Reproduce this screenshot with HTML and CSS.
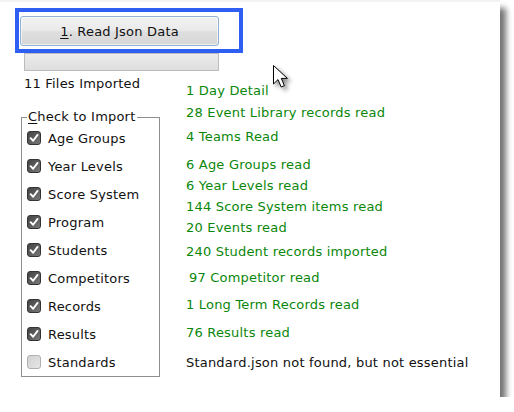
FILE: index.html
```html
<!DOCTYPE html>
<html lang="en">
<head>
<meta charset="utf-8">
<title>Read Json Data</title>
<link rel="stylesheet" href="styles.css">
</head>
<body>
<div class="window">
  <div class="actions">
    <button class="btn" type="button"><u>1</u>. Read Json Data</button>
    <div class="progress"></div>
  </div>
  <div class="focus-mark"></div>

  <div class="main">
    <div class="left">
      <div class="count">11 Files Imported</div>
      <fieldset class="group">
        <legend><u>C</u>heck to Import</legend>
        <label class="row"><span class="cb on"><svg viewBox="0 0 14 14"><path d="M3 7.2 L6 10.2 L11.2 3.4"/></svg></span>Age Groups</label>
        <label class="row"><span class="cb on"><svg viewBox="0 0 14 14"><path d="M3 7.2 L6 10.2 L11.2 3.4"/></svg></span>Year Levels</label>
        <label class="row"><span class="cb on"><svg viewBox="0 0 14 14"><path d="M3 7.2 L6 10.2 L11.2 3.4"/></svg></span>Score System</label>
        <label class="row"><span class="cb on"><svg viewBox="0 0 14 14"><path d="M3 7.2 L6 10.2 L11.2 3.4"/></svg></span>Program</label>
        <label class="row"><span class="cb on"><svg viewBox="0 0 14 14"><path d="M3 7.2 L6 10.2 L11.2 3.4"/></svg></span>Students</label>
        <label class="row"><span class="cb on"><svg viewBox="0 0 14 14"><path d="M3 7.2 L6 10.2 L11.2 3.4"/></svg></span>Competitors</label>
        <label class="row"><span class="cb on"><svg viewBox="0 0 14 14"><path d="M3 7.2 L6 10.2 L11.2 3.4"/></svg></span>Records</label>
        <label class="row"><span class="cb on"><svg viewBox="0 0 14 14"><path d="M3 7.2 L6 10.2 L11.2 3.4"/></svg></span>Results</label>
        <label class="row"><span class="cb off"></span>Standards</label>
      </fieldset>
    </div>

    <div class="log">
      <div class="ok">1 Day Detail</div>
      <div class="ok gap1">28 Event Library records read</div>
      <div class="ok gap3">4 Teams Read</div>
      <div class="ok gap7">6 Age Groups read</div>
      <div class="ok">6 Year Levels read</div>
      <div class="ok">144 Score System items read</div>
      <div class="ok">20 Events read</div>
      <div class="ok gap3">240 Student records imported</div>
      <div class="ok gap5 indent">97 Competitor read</div>
      <div class="ok gap6">1 Long Term Records read</div>
      <div class="ok gap7">76 Results read</div>
      <div class="msg gap9">Standard.json not found, but not essential</div>
    </div>
  </div>

  <svg class="cursor" width="22" height="28" viewBox="0 0 22 28">
    <path d="M1.5 1.5 L1.5 20 L6 15.6 L9.2 23 L12.4 21.6 L9.3 14.4 L15.4 14.4 Z" fill="#fff" stroke="#000" stroke-width="1" stroke-linejoin="miter"/>
  </svg>
</div>
</body>
</html>
```

FILE: styles.css
```css
html, body {
  margin: 0;
  padding: 0;
  background: #ffffff;
}

body {
  font-family: "DejaVu Sans", Verdana, sans-serif;
  font-size: 13px;
  letter-spacing: 0.2px;
  color: #111;
}

.window {
  position: relative;
  width: 500px;
  height: 395px;
  border-top: 2px solid #f3f3f3;
  background: #ffffff;
  box-shadow: 7px 7px 6px -1px rgba(0, 0, 0, 0.55);
}

.actions {
  display: flex;
  flex-direction: column;
  align-items: flex-start;
}

.btn {
  margin: 14px 0 0 20px;
  width: 199px;
  height: 30px;
  padding: 0;
  font-family: "DejaVu Sans", Verdana, sans-serif;
  font-size: 13px;
  letter-spacing: 0.2px;
  color: #111;
  border: 1px solid #8fb2d6;
  border-radius: 3px;
  background: linear-gradient(#f1f1f1 0%, #ebebeb 45%, #dedede 55%, #d6d6d6 100%);
  box-shadow: inset 0 0 0 1px rgba(255, 255, 255, 0.6);
}

.btn u {
  text-underline-offset: 2px;
}

.progress {
  margin: 7px 0 0 24px;
  width: 195px;
  height: 18px;
  box-sizing: border-box;
  border: 1px solid #bcbcbc;
  background: linear-gradient(#ececec, #dedede);
}

.focus-mark {
  position: absolute;
  left: 15px;
  top: 6px;
  width: 228px;
  height: 45px;
  box-sizing: border-box;
  border: 4px solid #2f5ef3;
}

.main {
  display: grid;
  grid-template-columns: 186px 1fr;
}

.left {
  padding-left: 21px;
}

.count {
  margin: 5px 0 0 3px;
  line-height: 16px;
}

.group {
  margin: 18px 0 0 0;
  width: 139px;
  box-sizing: border-box;
  padding: 0 0 0 5px;
  border: 1px solid #8e8e8e;
}

.group legend {
  padding: 0 2px 0 1px;
  margin: 0;
  line-height: 14px;
}

.group legend u {
  text-underline-offset: 2px;
}

.row {
  display: flex;
  align-items: center;
  gap: 7px;
  height: 28px;
}

.cb {
  width: 14px;
  height: 14px;
  box-sizing: border-box;
  border-radius: 3px;
  display: flex;
  align-items: center;
  justify-content: center;
}

.cb.on {
  border: 1px solid #333333;
  background: linear-gradient(135deg, #444444 0%, #5e5e5e 55%, #7c7c7c 100%);
}

.cb.on svg {
  width: 12px;
  height: 12px;
}

.cb.on path {
  fill: none;
  stroke: #ffffff;
  stroke-width: 2.2;
  stroke-linecap: round;
  stroke-linejoin: round;
}

.cb.off {
  border: 1px solid #b0b0b0;
  background: linear-gradient(135deg, #d2d2d2, #e6e6e6);
}

.log {
  padding-top: 9px;
}

.log div {
  line-height: 21px;
  white-space: nowrap;
}

.ok {
  color: #0a870a;
}

.msg {
  color: #111;
}

.indent { padding-left: 3px; }
.gap1 { margin-top: 1px; }
.gap3 { margin-top: 3px; }
.gap5 { margin-top: 5px; }
.gap6 { margin-top: 6px; }
.gap7 { margin-top: 7px; }
.gap9 { margin-top: 9px; }

.cursor {
  position: absolute;
  left: 272px;
  top: 62px;
  filter: drop-shadow(3px 3px 2px rgba(0, 0, 0, 0.45));
}
```
